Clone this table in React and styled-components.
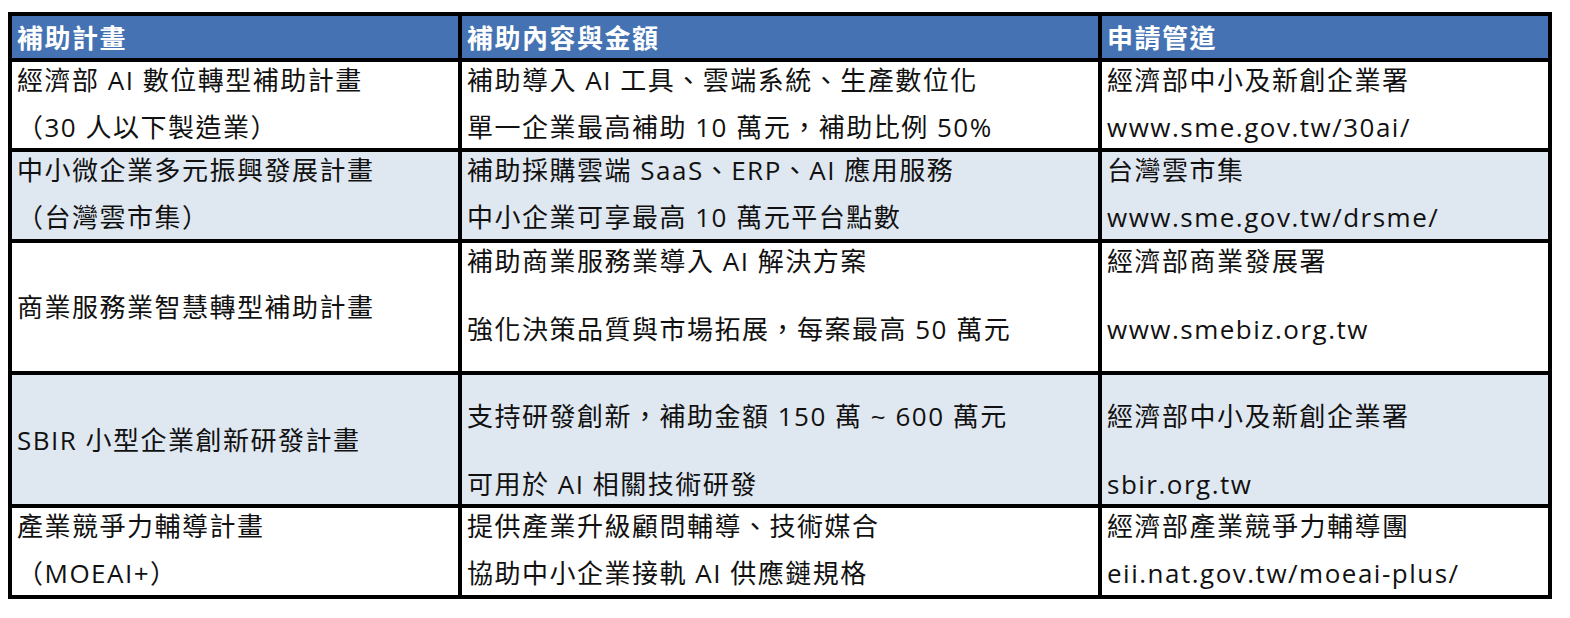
import React from 'react';
import styled, { createGlobalStyle } from 'styled-components';

const GlobalStyle = createGlobalStyle`
  html, body {
    margin: 0;
    padding: 0;
    background: #ffffff;
  }

  body {
    font-family: "Open Sans", "Noto Sans CJK TC", sans-serif;
    color: #111111;
  }
`;

// rows: each cell is a list of lines; layout says how the lines sit in the cell
const rows = [
  {
    shade: false,
    height: 86,
    cells: [
      { lines: ['經濟部 AI 數位轉型補助計畫', '（30 人以下製造業）'] },
      { lines: ['補助導入 AI 工具、雲端系統、生產數位化', '單一企業最高補助 10 萬元，補助比例 50%'] },
      { lines: ['經濟部中小及新創企業署', 'www.sme.gov.tw/30ai/'] },
    ],
  },
  {
    shade: true,
    height: 87,
    cells: [
      { lines: ['中小微企業多元振興發展計畫', '（台灣雲市集）'] },
      { lines: ['補助採購雲端 SaaS、ERP、AI 應用服務', '中小企業可享最高 10 萬元平台點數'] },
      { lines: ['台灣雲市集', 'www.sme.gov.tw/drsme/'] },
    ],
  },
  {
    shade: false,
    height: 128,
    cells: [
      { lines: ['商業服務業智慧轉型補助計畫'], layout: 'center' },
      { lines: ['補助商業服務業導入 AI 解決方案', '強化決策品質與市場拓展，每案最高 50 萬元'], layout: 'top' },
      { lines: ['經濟部商業發展署', 'www.smebiz.org.tw'], layout: 'top' },
    ],
  },
  {
    shade: true,
    height: 129,
    cells: [
      { lines: ['SBIR 小型企業創新研發計畫'], layout: 'center' },
      { lines: ['支持研發創新，補助金額 150 萬 ~ 600 萬元', '可用於 AI 相關技術研發'], layout: 'bottom' },
      { lines: ['經濟部中小及新創企業署', 'sbir.org.tw'], layout: 'bottom' },
    ],
  },
  {
    shade: false,
    height: 87,
    cells: [
      { lines: ['產業競爭力輔導計畫', '（MOEAI+）'] },
      { lines: ['提供產業升級顧問輔導、技術媒合', '協助中小企業接軌 AI 供應鏈規格'] },
      { lines: ['經濟部產業競爭力輔導團', 'eii.nat.gov.tw/moeai-plus/'] },
    ],
  },
];

const headers = ['補助計畫', '補助內容與金額', '申請管道'];

const App = () => {
  return (
    <>
      <GlobalStyle />
      <Page lang="zh-Hant-TW">
        <Table $rows={rows.map((r) => r.height)}>
          {headers.map((h) => (
            <HeadCell key={h}>{h}</HeadCell>
          ))}

          {rows.map((row, i) =>
            row.cells.map((cell, j) => (
              <Cell key={`${i}-${j}`} $shade={row.shade} $layout={cell.layout || 'pair'}>
                {cell.lines.map((line) => (
                  <Line key={line}>{line}</Line>
                ))}
              </Cell>
            ))
          )}
        </Table>
      </Page>
    </>
  );
};

export default App;

const Page = styled.div`
  padding: 12px 8px;
`;

const Table = styled.div`
  width: 1544px;
  box-sizing: border-box;
  display: grid;
  grid-template-columns: 446px 636px 446px;
  grid-template-rows: 42px ${({ $rows }) => $rows.map((h) => `${h}px`).join(' ')};
  gap: 4px;
  padding: 4px;
  background: #000000;
`;

const HeadCell = styled.div`
  background: #4472b2;
  color: #ffffff;
  font-size: 26px;
  font-weight: 700;
  letter-spacing: 1.5px;
  display: flex;
  align-items: center;
  padding-left: 5px;
  white-space: nowrap;
`;

const layouts = {
  pair: 'justify-content: flex-start; gap: 11px; padding-top: 0;',
  top: 'justify-content: flex-start; gap: 32px; padding-top: 0;',
  bottom: 'justify-content: flex-start; gap: 32px; padding-top: 23px;',
  center: 'justify-content: center; gap: 0; padding-top: 0;',
};

const Cell = styled.div`
  background: ${({ $shade }) => ($shade ? '#dfe7f0' : '#ffffff')};
  display: flex;
  flex-direction: column;
  padding-left: 5px;
  box-sizing: border-box;
  ${({ $layout }) => layouts[$layout]}
`;

const Line = styled.div`
  font-size: 26px;
  line-height: 36px;
  letter-spacing: 1.5px;
  white-space: nowrap;
`;
